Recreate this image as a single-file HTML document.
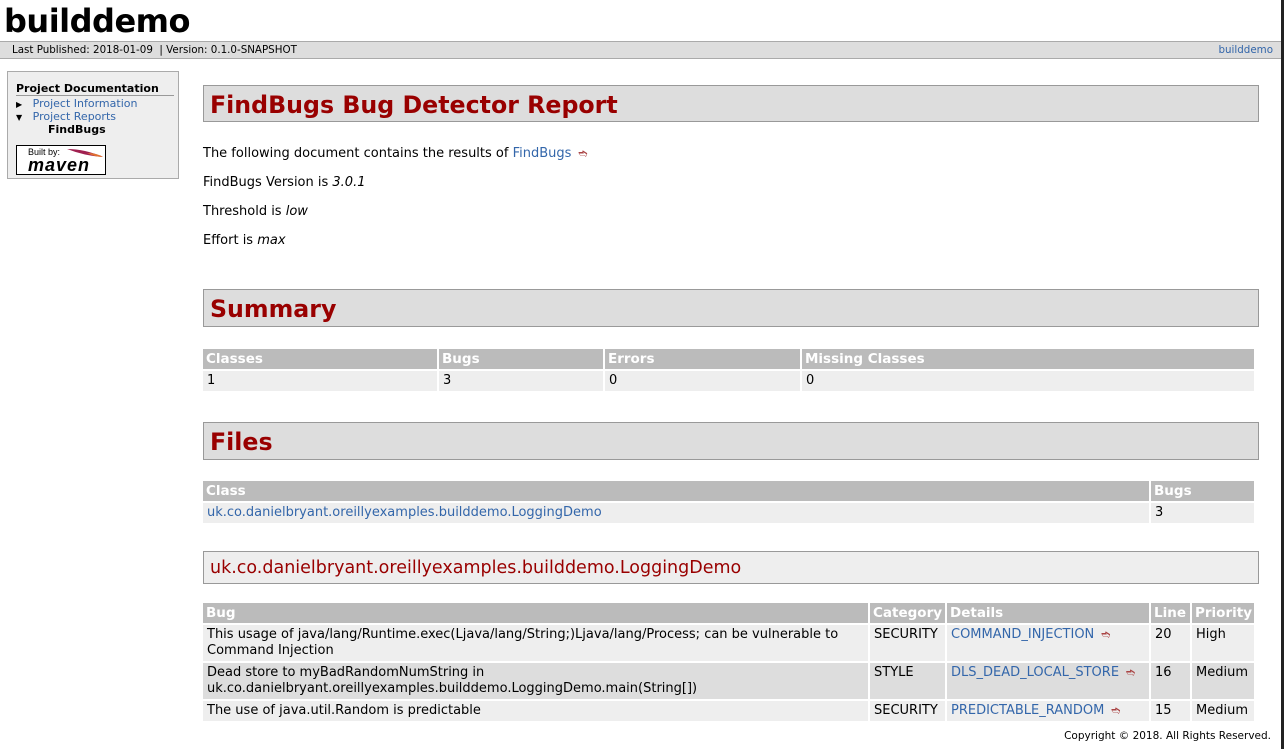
<!DOCTYPE html>
<html><head><meta charset="utf-8"><style>
*{margin:0;padding:0;box-sizing:border-box}
body{width:1284px;height:749px;overflow:hidden;background:#fff;font-family:"DejaVu Sans",Verdana,sans-serif;font-size:12px;color:#000;position:relative}
a{color:#36a;text-decoration:none}
.abs{position:absolute}
h1{position:absolute;left:4px;top:0;font-size:32px;font-weight:bold;line-height:42px;letter-spacing:-0.5px}
.bar{position:absolute;left:0;top:41px;width:1281px;height:18px;background:#ddd;border-top:1px solid #aaa;border-bottom:1px solid #aaa;font-size:10.3px;line-height:16px}
.nav{position:absolute;left:7px;top:71px;width:172px;height:108px;background:#eee;border:1px solid #aaa;font-size:11px}
.h2{position:absolute;left:203px;width:1056px;background:#ddd;border:1px solid #999;color:#900;font-weight:bold;font-size:23.7px;padding-left:6px}
.h3{position:absolute;left:203px;width:1056px;background:#eee;border:1px solid #999;color:#900;font-size:17.5px;padding-left:6px}
p{position:absolute;left:203px;font-size:13px}
table{position:absolute;left:203px;border-collapse:separate;border-spacing:2px 2px;font-size:13px;margin-left:-2px;table-layout:fixed}
th{background:#bbb;color:#fff;font-weight:bold;text-align:left;padding:0 3px;height:20px;font-size:13.5px}
td{background:#eee;padding:0 4px;height:20px;vertical-align:top;line-height:16px;padding-top:2px}
tr.b td{background:#ddd}
.ext{font-size:11px;color:#a44;margin-left:7px}
.dark{position:absolute;left:1281px;top:0;width:3px;height:749px;background:#222}
</style></head><body>
<div class="dark"></div>
<h1>builddemo</h1>
<div class="bar"><span class="abs" style="left:12px">Last Published: 2018-01-09 &nbsp;| Version: 0.1.0-SNAPSHOT</span><a class="abs" style="right:8px" href="#">builddemo</a></div>
<div class="nav">
<div class="abs" style="left:8px;top:10px;width:158px;border-bottom:1px solid #999;font-weight:bold;line-height:13px">Project Documentation</div>
<div class="abs" style="left:8px;top:25px;line-height:13px"><span style="font-size:8px">▶</span>&nbsp;&nbsp; <a href="#">Project Information</a></div>
<div class="abs" style="left:8px;top:38px;line-height:13px"><span style="font-size:8px">▼</span>&nbsp;&nbsp; <a href="#">Project Reports</a></div>
<div class="abs" style="left:40px;top:51px;line-height:13px;font-weight:bold">FindBugs</div>
<div class="abs" style="left:8px;top:73px;width:90px;height:30px;background:#fff;border:1px solid #000">
<span class="abs" style="left:11px;top:1px;font-size:9px;font-family:'Liberation Sans',sans-serif">Built by:</span>
<svg class="abs" style="left:48px;top:1px" width="40" height="14"><path d="M2 2 Q20 2 38 10 Q20 9 2 2Z" fill="#a02050"/><path d="M22 6 Q32 6 38 10 Q30 10 22 6Z" fill="#e07030"/></svg>
<span class="abs" style="left:11px;top:9px;font-size:18px;font-weight:bold;font-style:italic;font-family:'Liberation Sans',sans-serif;letter-spacing:1px">maven</span>
</div>
</div>

<div class="h2" style="top:85px;height:37px;line-height:38px">FindBugs Bug Detector Report</div>
<p style="top:146px">The following document contains the results of <a href="#">FindBugs</a><span class="ext">➬</span></p>
<p style="top:175px">FindBugs Version is <i>3.0.1</i></p>
<p style="top:204px">Threshold is <i>low</i></p>
<p style="top:233px">Effort is <i>max</i></p>

<div class="h2" style="top:289px;height:38px;line-height:39px">Summary</div>
<table style="top:347px;width:1055px">
<tr><th style="width:234px">Classes</th><th style="width:164px">Bugs</th><th style="width:195px">Errors</th><th>Missing Classes</th></tr>
<tr><td>1</td><td>3</td><td>0</td><td>0</td></tr>
</table>

<div class="h2" style="top:422px;height:38px;line-height:39px">Files</div>
<table style="top:479px;width:1055px">
<tr><th>Class</th><th style="width:103px">Bugs</th></tr>
<tr><td><a href="#">uk.co.danielbryant.oreillyexamples.builddemo.LoggingDemo</a></td><td>3</td></tr>
</table>

<div class="h3" style="top:551px;height:33px;line-height:33px">uk.co.danielbryant.oreillyexamples.builddemo.LoggingDemo</div>
<table style="top:601px;width:1055px">
<tr><th>Bug</th><th style="width:75px">Category</th><th style="width:202px">Details</th><th style="width:39px">Line</th><th style="width:62px">Priority</th></tr>
<tr><td style="height:36px">This usage of java/lang/Runtime.exec(Ljava/lang/String;)Ljava/lang/Process; can be vulnerable to Command Injection</td><td>SECURITY</td><td><a href="#">COMMAND_INJECTION</a><span class="ext">➬</span></td><td>20</td><td>High</td></tr>
<tr class="b"><td style="height:36px">Dead store to myBadRandomNumString in uk.co.danielbryant.oreillyexamples.builddemo.LoggingDemo.main(String[])</td><td>STYLE</td><td><a href="#">DLS_DEAD_LOCAL_STORE</a><span class="ext">➬</span></td><td>16</td><td>Medium</td></tr>
<tr><td>The use of java.util.Random is predictable</td><td>SECURITY</td><td><a href="#">PREDICTABLE_RANDOM</a><span class="ext">➬</span></td><td>15</td><td>Medium</td></tr>
</table>
<div class="abs" style="right:13px;top:730px;font-size:10.5px">Copyright © 2018. All Rights Reserved.</div>
</body></html>
